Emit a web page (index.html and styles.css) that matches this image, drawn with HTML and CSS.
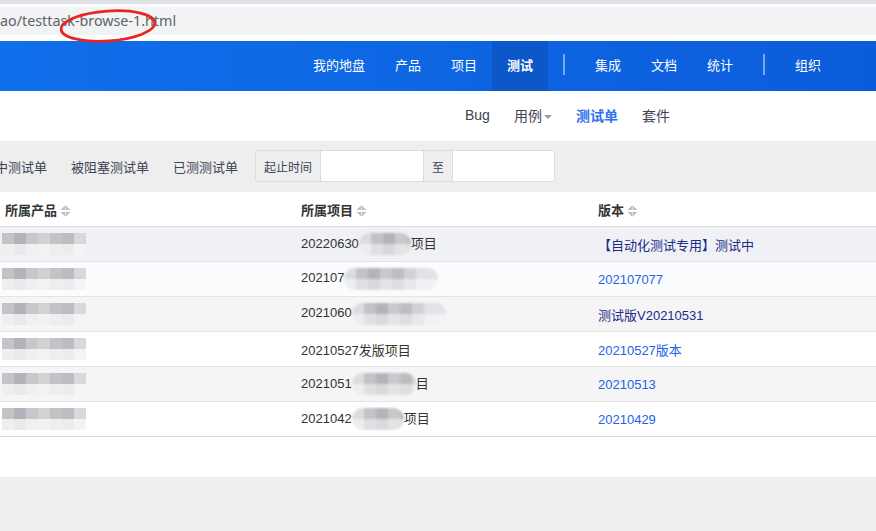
FILE: index.html
```html
<!DOCTYPE html>
<html lang="zh-CN">
<head>
    <meta charset="UTF-8">
    <meta name="viewport" content="width=device-width, initial-scale=1.0">
    <title>测试单</title>
    <link rel="stylesheet" href="styles.css">
</head>
<body>
    <div class="chrome">
        <div class="url-bar">ao/testtask-browse-1.html</div>
        <svg class="mark" width="104" height="40" viewBox="0 0 104 40">
            <ellipse cx="51" cy="19" rx="47" ry="15" transform="rotate(-4 51 19)" fill="none" stroke="#e8261f" stroke-width="2.8"/>
        </svg>
    </div>

    <header class="navbar">
        <nav class="main-nav">
            <a href="#">我的地盘</a>
            <a href="#">产品</a>
            <a href="#">项目</a>
            <a href="#" class="active">测试</a>
            <span class="divider"></span>
            <a href="#">集成</a>
            <a href="#">文档</a>
            <a href="#">统计</a>
            <span class="divider"></span>
            <a href="#">组织</a>
        </nav>
    </header>

    <div class="subnav">
        <a href="#">Bug</a>
        <a href="#">用例<span class="caret"></span></a>
        <a href="#" class="active">测试单</a>
        <a href="#">套件</a>
    </div>

    <div class="toolbar">
        <a href="#" class="first">测试中测试单</a>
        <a href="#">被阻塞测试单</a>
        <a href="#">已测测试单</a>
        <div class="input-group">
            <span class="addon">起止时间</span>
            <input type="text">
            <span class="addon">至</span>
            <input type="text">
        </div>
    </div>

    <div class="panel">
        <table class="list">
            <colgroup><col class="c1"><col class="c2"><col></colgroup>
            <thead>
                <tr>
                    <th>所属产品<span class="sort"></span></th>
                    <th>所属项目<span class="sort"></span></th>
                    <th>版本<span class="sort"></span></th>
                </tr>
            </thead>
            <tbody>
                <tr class="hover">
                    <td><span class="mosaic"></span></td>
                    <td>20220630<span class="smudge w52"></span>项目</td>
                    <td><a href="#" class="visited">【自动化测试专用】测试中</a></td>
                </tr>
                <tr>
                    <td><span class="mosaic"></span></td>
                    <td>202107<span class="smudge w94"></span></td>
                    <td><a href="#">202107077</a></td>
                </tr>
                <tr>
                    <td><span class="mosaic"></span></td>
                    <td>2021060<span class="smudge w94"></span></td>
                    <td><a href="#" class="visited">测试版V20210531</a></td>
                </tr>
                <tr>
                    <td><span class="mosaic"></span></td>
                    <td>20210527发版项目</td>
                    <td><a href="#">20210527版本</a></td>
                </tr>
                <tr>
                    <td><span class="mosaic"></span></td>
                    <td>2021051<span class="smudge w64"></span>目</td>
                    <td><a href="#">20210513</a></td>
                </tr>
                <tr>
                    <td><span class="mosaic"></span></td>
                    <td>2021042<span class="smudge w52"></span>项目</td>
                    <td><a href="#">20210429</a></td>
                </tr>
            </tbody>
        </table>
    </div>
</body>
</html>
```

FILE: styles.css
```css
html, body { margin: 0; padding: 0; }
body {
    background: #eeeeee;
    font-family: "Liberation Sans", "Noto Sans CJK SC", sans-serif;
    font-size: 13px;
    color: #333;
    overflow: hidden;
}
a { text-decoration: none; }

/* browser address bar */
.chrome {
    position: relative;
    background: #fff;
    border-top: 4px solid #dee1e6;
    padding: 3px 0 6px;
}
.url-bar {
    height: 28px;
    line-height: 28px;
    background: #f1f3f4;
    color: #5f6368;
    font-family: "Noto Sans", "Liberation Sans", sans-serif;
    font-size: 14.3px;
}
.mark { position: absolute; left: 57px; top: 3px; }

/* main navbar */
.navbar {
    height: 50px;
    background: linear-gradient(to right, #106fea, #0b5cdb);
}
.main-nav {
    display: flex;
    justify-content: flex-end;
    align-items: stretch;
    height: 100%;
    padding-right: 40px;
}
.main-nav a {
    display: flex;
    align-items: center;
    padding: 0 15px 3px;
    color: #fff;
}
.main-nav a.active { background: #0c58c9; font-weight: bold; }
.divider {
    width: 2px;
    height: 21px;
    margin: 0 15px 3px;
    align-self: center;
    background: rgba(255, 255, 255, 0.45);
}

/* sub navbar */
.subnav {
    height: 48px;
    padding-bottom: 2px;
    background: #fff;
    display: flex;
    align-items: center;
    gap: 24px;
    padding-left: 465px;
}
.subnav a { color: #3c4353; font-size: 14px; }
.subnav a.active { color: #2e6ff0; font-weight: bold; }
.caret {
    display: inline-block;
    margin-left: 2px;
    vertical-align: middle;
    border-top: 4px solid #999;
    border-left: 4px solid transparent;
    border-right: 4px solid transparent;
}

/* toolbar */
.toolbar {
    height: 50px;
    padding-bottom: 1px;
    display: flex;
    align-items: center;
    gap: 24px;
    overflow: hidden;
}
.toolbar a { color: #3c4353; white-space: nowrap; }
.toolbar .first { margin-left: -31px; }
.input-group {
    display: flex;
    height: 30px;
    margin-left: -7px;
    border: 1px solid #dcdcdc;
    border-radius: 2px;
}
.addon {
    display: flex;
    align-items: center;
    padding: 0 8px;
    font-size: 12px;
    background: #eeeeee;
    color: #3c4353;
    border-right: 1px solid #dcdcdc;
}
.input-group input {
    width: 102px;
    border: 0;
    border-right: 1px solid #dcdcdc;
    padding: 0;
    background: #fff;
}
.input-group input:last-child { width: 101px; border-right: 0; }

/* table panel */
.panel {
    background: #fff;
    padding-bottom: 40px;
    box-shadow: 0 1px 2px rgba(0, 0, 0, 0.12);
}
.list {
    width: 100%;
    border-collapse: collapse;
    table-layout: fixed;
}
.list col.c1 { width: 296px; }
.list col.c2 { width: 297px; }
.list th, .list td {
    height: 34px;
    padding: 0 0 0 5px;
    text-align: left;
    white-space: nowrap;
    overflow: hidden;
    border-bottom: 1px solid #e4e4e4;
}
.list th { font-weight: bold; color: #333; border-bottom-color: #dcdcdc; }
.list tbody tr:nth-child(odd) { background: #f5f5f5; }
.list tbody tr:nth-child(2) { background: #fbfcfe; }
.list tbody tr.hover { background: #eff1f5; }
.list tbody tr:last-child td { border-bottom-color: #d8d8d8; }
.list a { color: #2463e6; }
.list a.visited { color: #1c2a8a; }

.sort {
    display: inline-block;
    width: 9px;
    height: 12px;
    margin-left: 4px;
    vertical-align: -2px;
    background:
        linear-gradient(to top left, #bcc0c7 50%, transparent 50%) 0 0 / 4.5px 5px no-repeat,
        linear-gradient(to top right, #bcc0c7 50%, transparent 50%) 4.5px 0 / 4.5px 5px no-repeat,
        linear-gradient(to bottom left, #bcc0c7 50%, transparent 50%) 0 7px / 4.5px 5px no-repeat,
        linear-gradient(to bottom right, #bcc0c7 50%, transparent 50%) 4.5px 7px / 4.5px 5px no-repeat;
}

/* privacy blur placeholders */
.mosaic {
    display: inline-block;
    width: 84px;
    height: 22px;
    margin-left: -3px;
    vertical-align: middle;
    background:
        linear-gradient(to bottom, transparent 50%, rgba(255, 255, 255, 0.72) 50%),
        linear-gradient(to right, #c4c4c8 0 12px, #b3b3b9 12px 24px, #c8c8cc 24px 36px, #d2d2d5 36px 48px, #c3c3c7 48px 60px, #bcbcc3 60px 72px, #d9d9db 72px 84px);
}
.smudge {
    display: inline-block;
    height: 22px;
    vertical-align: middle;
    border-radius: 11px;
    background:
        linear-gradient(to bottom, transparent 50%, rgba(255, 255, 255, 0.5) 50%),
        linear-gradient(to right, #dcdce0 0 12px, #c2c2c7 12px 24px, #b3b4ba 24px 36px, #c9c9cd 36px 48px, #bdbdc2 48px 60px, #d2d2d6 60px 72px, #e2e3e6 72px 100px);
    filter: blur(1px);
}
.w52 { width: 52px; }
.w64 { width: 64px; }
.w94 { width: 94px; }
```
